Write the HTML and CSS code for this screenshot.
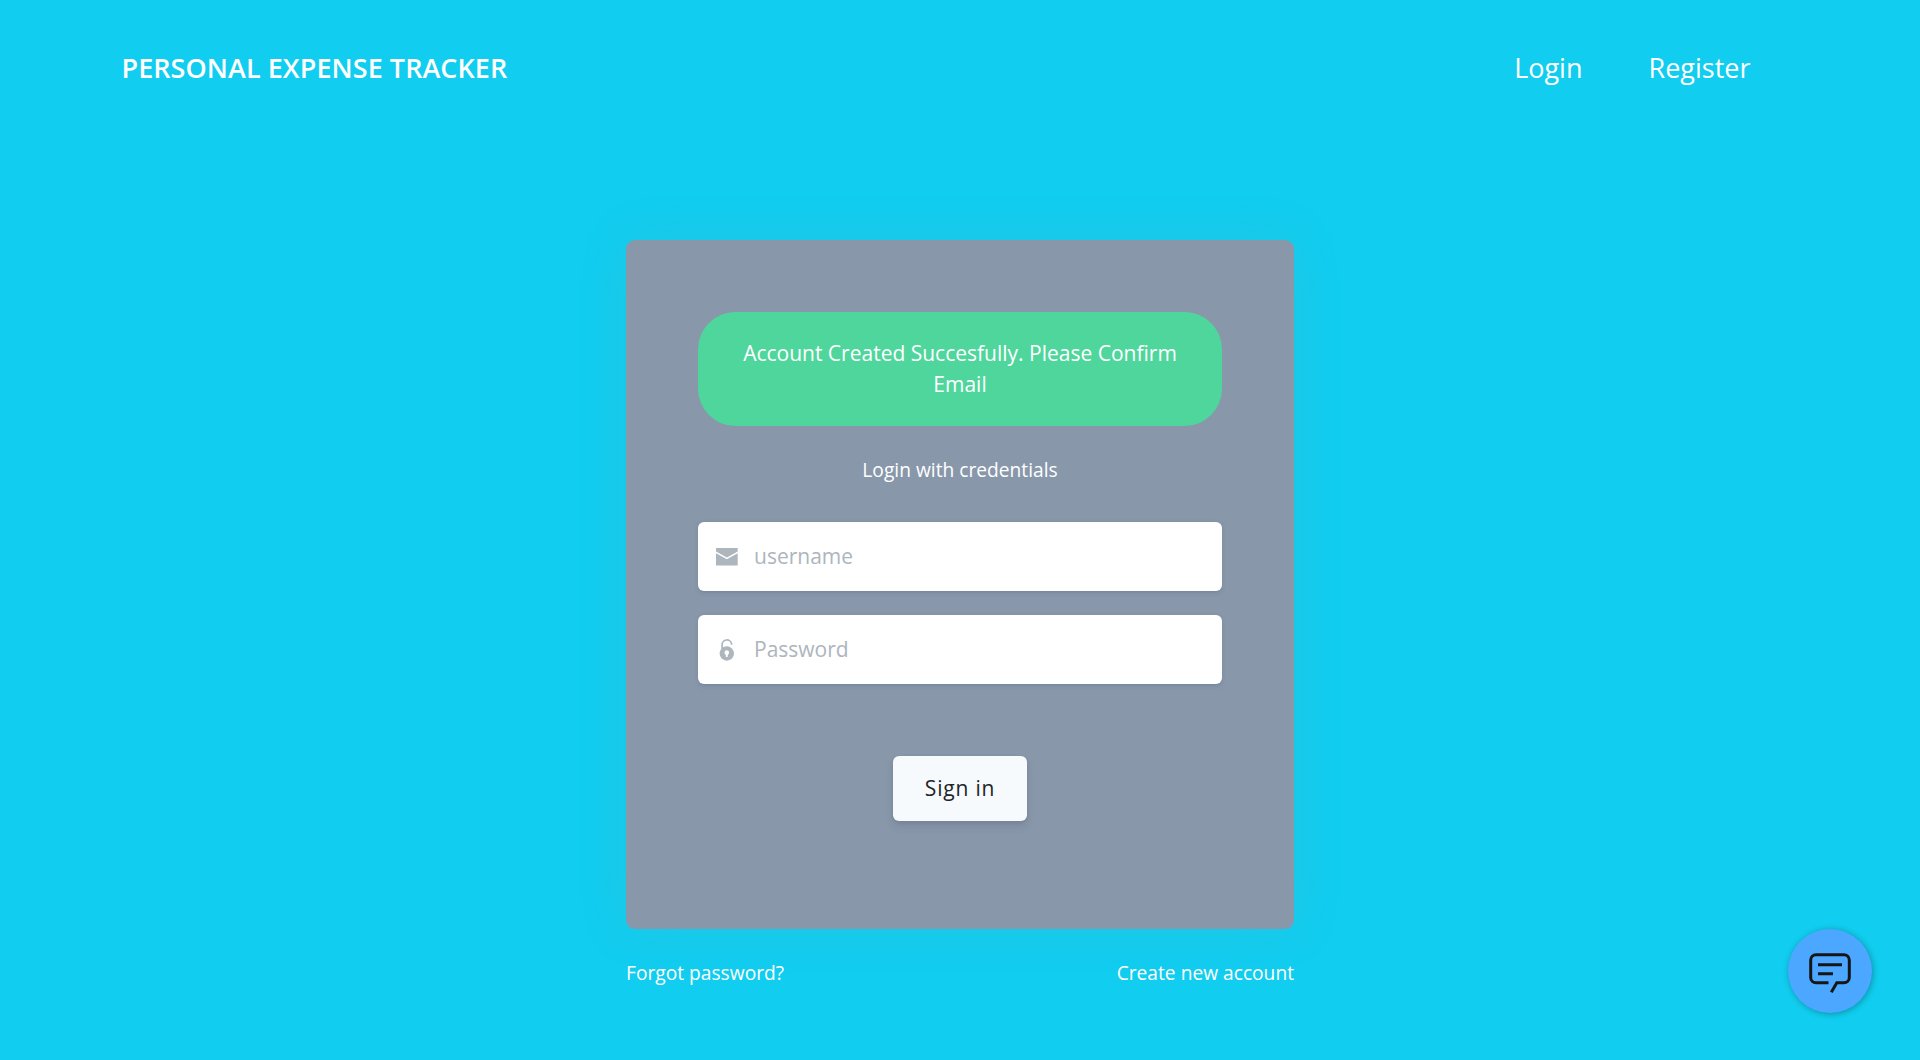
FILE: index.html
```
<!DOCTYPE html>
<html lang="en">
<head>
<meta charset="utf-8">
<title>Personal Expense Tracker</title>
<link rel="stylesheet" href="styles.css">
</head>
<body>
<header class="navbar">
  <a class="brand">PERSONAL EXPENSE TRACKER</a>
  <nav class="nav-links"><a>Login</a><a>Register</a></nav>
</header>
<main class="login">
  <section class="card">
    <div class="alert">Account Created Succesfully. Please Confirm Email</div>
    <div class="hint">Login with credentials</div>
    <form class="form">
      <label class="field">
        <svg class="field-icon" viewBox="0 0 22 22" fill="currentColor"><path d="M0 2h21.700v3.600L10.900 11.600 0 5.600zM0 7.200l10.900 6 10.800-6v12.300H0z"/></svg>
        <input type="text" placeholder="username">
      </label>
      <label class="field">
        <svg class="field-icon" viewBox="0 0 22 22"><path d="M6.100 11V5.800a4.800 4.800 0 0 1 9.500-1v1" fill="none" stroke="currentColor" stroke-width="1.700"/><circle cx="10.800" cy="14.500" r="7.200" fill="currentColor"/><path d="M10.800 11.300a2.300 2.300 0 0 1 1.200 4.300l-.4 2.300h-1.600l-.4-2.300a2.300 2.300 0 0 1 1.200-4.300z" fill="#fff"/></svg>
        <input type="password" placeholder="Password">
      </label>
      <button class="submit" type="button">Sign in</button>
    </form>
  </section>
  <div class="links"><a>Forgot password?</a><a>Create new account</a></div>
</main>
<button class="chat" type="button" aria-label="Chat">
  <svg viewBox="0 0 42 40" fill="none" stroke="#161616" stroke-width="3"><path d="M19.500 29.700H7a5.300 5.300 0 0 1-5.300-5.300V7A5.300 5.300 0 0 1 7 1.700h28A5.300 5.300 0 0 1 40.300 7v17.400a5.300 5.300 0 0 1-5.300 5.300h-7.200L22.300 39.200M9 11.700h24M9 20.700h15"/></svg>
</button>
</body>
</html>
```
FILE: styles.css
```
* { box-sizing: border-box; }
body {
  margin: 0;
  height: 1060px;
  overflow: hidden;
  background: #11cdef;
  color: #fff;
  font-family: "Open Sans", sans-serif;
  font-size: 24px;
  line-height: 1.5;
}
.navbar {
  display: flex;
  align-items: center;
  justify-content: space-between;
  height: 136px;
  padding: 0 169.5px 0 121.5px;
}
.brand { font-size: 27px; font-weight: 600; letter-spacing: .06px; }
.nav-links { display: flex; gap: 66px; font-size: 27px; }
.login { width: 668px; margin: 104px auto 0; }
.card {
  height: 689px;
  padding: 72px;
  border-radius: 9px;
  background: #8898aa;
  box-shadow: 0 0 48px rgba(136, 152, 170, .15);
}
.alert {
  height: 114px;
  padding: 25.5px 37px;
  border-radius: 37.5px;
  background: #4fd69c;
  font-size: 21px;
  text-align: center;
}
.hint { margin: 29px 0 38px; font-size: 19.2px; line-height: 29px; text-align: center; }
.form { display: flex; flex-direction: column; align-items: center; }
.field {
  display: flex;
  align-items: center;
  width: 100%;
  height: 69px;
  padding: 0 18px;
  gap: 16px;
  margin-bottom: 24px;
  border-radius: 6px;
  background: #fff;
  color: #adb5bd;
  box-shadow: 0 1.5px 4.5px rgba(50, 50, 93, .15), 0 1.5px 0 rgba(0, 0, 0, .02);
}
.field-icon { width: 22px; height: 22px; flex: none; }
.field input {
  flex: 1;
  min-width: 0;
  padding: 1px 0 0;
  border: 0;
  outline: 0;
  background: none;
  font: 21px/1.5 "Open Sans", sans-serif;
}
.field input::placeholder { color: #adb5bd; opacity: 1; }
.submit {
  width: 134px;
  height: 65px;
  margin-top: 48px;
  padding: 0;
  border: 0;
  border-radius: 6px;
  background: #f7fafc;
  color: #212529;
  font: 500 21px/1.5 "Open Sans", sans-serif;
  letter-spacing: .8px;
  box-shadow: 0 6px 9px rgba(50, 50, 93, .11), 0 1.5px 4.5px rgba(0, 0, 0, .08);
}
.links { display: flex; justify-content: space-between; margin-top: 29.5px; font-size: 19.2px; }
.chat {
  position: fixed;
  right: 48px;
  bottom: 47px;
  display: flex;
  align-items: center;
  justify-content: center;
  width: 84px;
  height: 84px;
  padding: 4px 0 0;
  border: 0;
  border-radius: 50%;
  background: #4ba7ff;
  box-shadow: 1px 1px 6px rgba(0, 0, 0, .3);
}
.chat svg { width: 42px; height: 40px; }
```
